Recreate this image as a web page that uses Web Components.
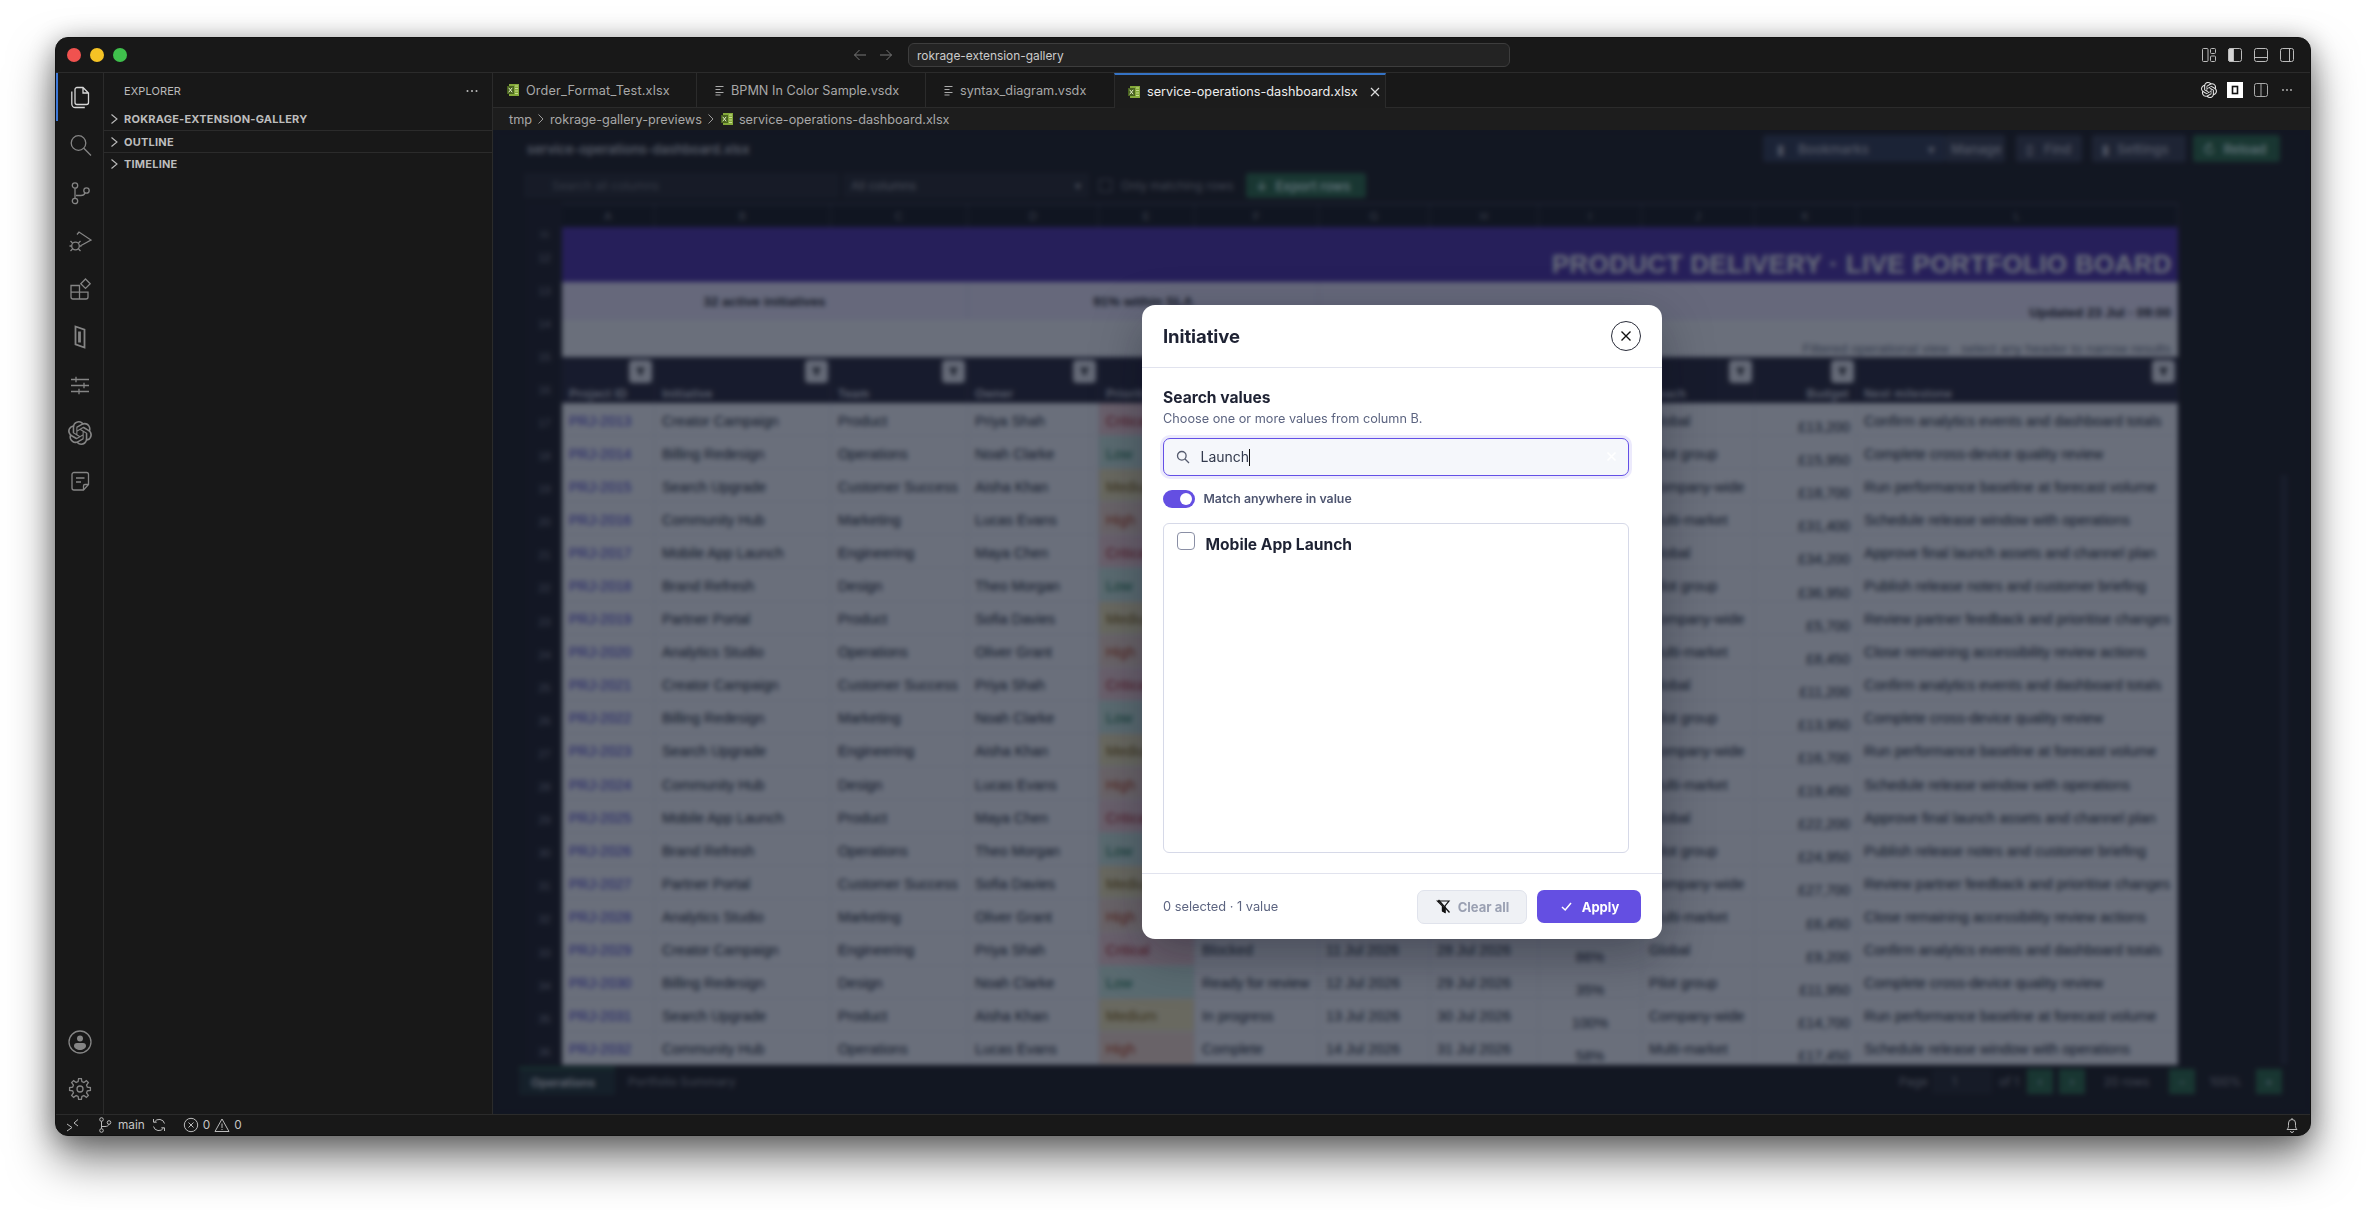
<!DOCTYPE html>
<html lang="en"><head><meta charset="utf-8"><title>rokrage-extension-gallery</title>
<style>
html,body{margin:0;height:100%;background:#fff;overflow:hidden}
body{padding:37px 55px 0;box-sizing:border-box;font-family:Inter,"Liberation Sans",sans-serif}
</style></head><body>
<x-window>
  <x-titlebar></x-titlebar>
  <x-activitybar></x-activitybar>
  <x-sidebar></x-sidebar>
  <x-editor></x-editor>
  <x-statusbar></x-statusbar>
</x-window>
<script>
const def=(name,html)=>customElements.define(name,class extends HTMLElement{constructor(){super();const r=this.attachShadow({mode:'open'});r.innerHTML=typeof html==='function'?html():html;}});
const xl=(s=14)=>`<svg width="${s}" height="${s}" viewBox="0 0 14 14" style="flex:none"><path d="M3 1h8l2 0v12H3z" fill="#84a93a"/><path d="M9 3h3M9 5.500h3M9 8h3M9 10.500h3" stroke="#c7dc8e" stroke-width="1"/><rect x="1" y="3" width="7" height="8" fill="#49631f"/><path d="M2.700 4.800l3.500 4.500M6.200 4.800l-3.500 4.500" stroke="#e5f0c8" stroke-width="1"/></svg>`;
const vs=`<svg width="10" height="14" viewBox="0 0 10 14" style="flex:none"><path d="M0.500 3.500h8M0.500 6.500h5M0.500 9.500h8M0.500 12h5" stroke="#aaa" stroke-width="1.200"/></svg>`;
const OPENAI="M22.2819 9.8211a5.9847 5.9847 0 0 0-.5157-4.9108 6.0462 6.0462 0 0 0-6.5098-2.9A6.0651 6.0651 0 0 0 4.9807 4.1818a5.9847 5.9847 0 0 0-3.9977 2.9 6.0462 6.0462 0 0 0 .7427 7.0966 5.98 5.98 0 0 0 .511 4.9107 6.051 6.051 0 0 0 6.5146 2.9001A5.9847 5.9847 0 0 0 13.2599 24a6.0557 6.0557 0 0 0 5.7718-4.2058 5.9894 5.9894 0 0 0 3.9977-2.9001 6.0557 6.0557 0 0 0-.7475-7.0729zm-9.022 12.6081a4.4755 4.4755 0 0 1-2.8764-1.0408l.1419-.0804 4.7783-2.7582a.7948.7948 0 0 0 .3927-.6813v-6.7369l2.02 1.1686a.071.071 0 0 1 .038.052v5.5826a4.504 4.504 0 0 1-4.4945 4.4944zm-9.6607-4.1254a4.4708 4.4708 0 0 1-.5346-3.0137l.142.0852 4.783 2.7582a.7712.7712 0 0 0 .7806 0l5.8428-3.3685v2.3324a.0804.0804 0 0 1-.0332.0615L9.74 19.9502a4.4992 4.4992 0 0 1-6.1408-1.6464zM2.3408 7.8956a4.485 4.485 0 0 1 2.3655-1.9728V11.6a.7664.7664 0 0 0 .3879.6765l5.8144 3.3543-2.0201 1.1685a.0757.0757 0 0 1-.071 0l-4.8303-2.7865A4.504 4.504 0 0 1 2.3408 7.872zm16.5963 3.8558L13.1038 8.364 15.1192 7.2a.0757.0757 0 0 1 .071 0l4.8303 2.7913a4.4944 4.4944 0 0 1-.6765 8.1042v-5.6772a.79.79 0 0 0-.407-.667zm2.0107-3.0231l-.142-.0852-4.7735-2.7818a.7759.7759 0 0 0-.7854 0L9.409 9.2297V6.8974a.0662.0662 0 0 1 .0284-.0615l4.8303-2.7866a4.4992 4.4992 0 0 1 6.6802 4.66zM8.3065 12.863l-2.02-1.1638a.0804.0804 0 0 1-.038-.0567V6.0742a4.4992 4.4992 0 0 1 7.3757-3.4537l-.142.0805L8.704 5.459a.7948.7948 0 0 0-.3927.6813zm1.0976-2.3654l2.602-1.4998 2.6069 1.4998v2.9994l-2.5974 1.4997-2.6067-1.4997Z";
const gear=(()=>{let d='';const n=8,cx=12,cy=12,R=10.5,r=7.6;for(let i=0;i<n;i++){const a=i/n*2*Math.PI-Math.PI/2,st=2*Math.PI/n;const pts=[[r,a-st*.32],[R,a-st*.17],[R,a+st*.17],[r,a+st*.32]];pts.forEach((p,j)=>{const x=(cx+p[0]*Math.cos(p[1])).toFixed(2),y=(cy+p[0]*Math.sin(p[1])).toFixed(2);d+=(i===0&&j===0?'M':'L')+x+' '+y});}return d+'Z'})();

def('x-window',`<style>
:host{display:grid;grid-template-columns:47px 390px 1fr;grid-template-rows:35px 1fr 21px;width:2256px;height:1099px;box-sizing:border-box;background:#181818;border:1px solid #111;border-radius:13px;overflow:hidden;
box-shadow:0 24px 46px rgba(0,0,0,.5),0 4px 26px rgba(0,0,0,.32)}
::slotted(x-titlebar),::slotted(x-statusbar){grid-column:1/-1}
</style><slot></slot>`);

def('x-titlebar',`<style>
:host{display:flex;align-items:center;box-sizing:border-box;background:#181818;border-bottom:1px solid #2b2b2b;padding-left:11px;color:#ccc;font:12px Inter,sans-serif}
.l{display:flex;gap:9px}.l i{width:14px;height:14px;border-radius:50%;display:block}
.nav{display:flex;gap:10px;margin-left:725px;width:48px}
.cmd{margin-left:8px;width:602px;height:24px;box-sizing:border-box;border:1px solid #3d3d3d;border-radius:6px;background:#232323;display:flex;align-items:center;padding-left:8px;font-size:11.900px;color:#ccc}
.r{margin-left:auto;display:flex;gap:10px;padding-right:15px;width:94px;justify-content:flex-end}
svg{display:block}
</style>
<div class="l"><i style="background:#f0524f"></i><i style="background:#f5c325"></i><i style="background:#3fc04c"></i></div>
<div class="nav"><svg width="16" height="16" viewBox="0 0 16 16" fill="none" stroke="#777"><path d="M14 8H2.500M7.500 3l-5 5 5 5"/></svg><svg width="16" height="16" viewBox="0 0 16 16" fill="none" stroke="#777"><path d="M2 8h11.500M8.500 3l5 5-5 5"/></svg></div>
<div class="cmd">rokrage-extension-gallery</div>
<div class="r">
<svg width="16" height="16" viewBox="0 0 16 16" fill="none" stroke="#bbb"><rect x="1.500" y="1.500" width="5.500" height="13" rx="1"/><rect x="9.500" y="1.500" width="5" height="5" rx="1"/><rect x="9.500" y="9" width="5" height="5.500" rx="1"/></svg>
<svg width="16" height="16" viewBox="0 0 16 16" fill="none" stroke="#bbb"><rect x="1.500" y="1.500" width="13" height="13" rx="2"/><path d="M1.500 3.500a2 2 0 0 1 2-2h3v13h-3a2 2 0 0 1-2-2z" fill="#d5d5d5"/></svg>
<svg width="16" height="16" viewBox="0 0 16 16" fill="none" stroke="#bbb"><rect x="1.500" y="1.500" width="13" height="13" rx="2"/><path d="M1.500 10.500h13"/></svg>
<svg width="16" height="16" viewBox="0 0 16 16" fill="none" stroke="#bbb"><rect x="1.500" y="1.500" width="13" height="13" rx="2"/><path d="M10.500 1.500v13"/></svg>
</div>`);

const acts=[
`<path d="M9 2.500h6l5.500 5.500v9.500a2 2 0 0 1-2 2H9a2 2 0 0 1-2-2v-13a2 2 0 0 1 2-2z M15 2.500V8h5.500"/><path d="M3.800 6.500v12.500a3.500 3.500 0 0 0 3.500 3.500h9.500"/>`,
`<circle cx="10.500" cy="10" r="7.300"/><path d="M15.800 15.300L23 22.500"/>`,
`<circle cx="7" cy="4.500" r="2.700"/><circle cx="7" cy="20" r="2.700"/><circle cx="18.500" cy="9.500" r="2.700"/><path d="M7 7.200v10.100M8 14.500h5c2.500 0 3.500-1 4-2.500"/>`,
`<path d="M9 5.500l2-2.500 12 8-10 5.500"/><circle cx="7.500" cy="17" r="3.800"/><path d="M4.500 14L2.500 12M10.500 14l2-2M3.500 17H1.500M11.500 17H13.500M4.500 20l-2 2M10.500 20l2 2"/>`,
`<path d="M3 8.500h8.500V22H5a2 2 0 0 1-2-2zM3 15.200h17V20a2 2 0 0 1-2 2h-6.500M11.500 15.200V22"/><path d="M17.500 2l4.700 4.700-4.700 4.700-4.700-4.700z"/>`,
`<path d="M7.500 1.500l9 3.200v17.800l-9-3.200z" stroke-width="1.800"/><path d="M11.500 6.500v11" stroke-width="2.800"/>`,
`<path d="M3 6.500h18M3 12.500h18M3 18.500h18M8 3.800v5.400M16 9.800v5.400M11 15.800v5.400" />`,
`<path d="${OPENAI}" fill="#858585" stroke="none"/>`,
`<path d="M6 3.500h12.500a2 2 0 0 1 2 2v10l-5 5.500H6a2 2 0 0 1-2-2V5.500a2 2 0 0 1 2-2z"/><path d="M20.500 15.500h-3.500a1.500 1.500 0 0 0-1.500 1.500v4M8 9h8.500M8 13h5"/>`];
def('x-activitybar',`<style>
:host{display:flex;flex-direction:column;align-items:center;box-sizing:border-box;border-right:1px solid #2b2b2b;background:#181818;position:relative;padding-top:12px;width:48px;margin-right:-1px}
.i{width:24px;height:24px;margin-bottom:24px;display:block}
.bar{position:absolute;left:0;top:0;width:2px;height:48px;background:#3d78d8}
.sp{flex:1}
svg{fill:none;stroke:#858585;stroke-width:1.300}
svg.a{stroke:#d7d7d7}
</style><div class="bar"></div>
${acts.map((p,i)=>`<svg class="i ${i==0?'a':''}" viewBox="0 0 24 24">${p}</svg>`).join('')}
<div class="sp"></div>
<svg class="i" viewBox="0 0 24 24" style="margin-bottom:23px"><circle cx="12" cy="12" r="11"/><circle cx="12" cy="8.500" r="3" fill="#858585" stroke="none"/><path d="M6 16a3 3 0 0 1 3-3h6a3 3 0 0 1 3 3c0 2-3 4-6 4s-6-2-6-4z" fill="#858585" stroke="none"/></svg>
<svg class="i" viewBox="0 0 24 24" style="margin-bottom:13px"><path d="${gear}"/><circle cx="12" cy="12" r="3"/></svg>`);

def('x-sidebar',`<style>
:host{display:block;box-sizing:border-box;border-right:1px solid #2b2b2b;background:#181818;color:#ccc;font:11px Inter,sans-serif}
.h{height:35px;display:flex;align-items:center;padding:0 12px 0 21px;color:#bbb;letter-spacing:.1px}
.h span{flex:1}
.s{display:flex;align-items:center;height:22px;box-sizing:border-box;border-bottom:1px solid #2b2b2b;font-weight:700;color:#bdbdbd;letter-spacing:.22px;gap:5px;padding-left:6px}
.s:last-child{border:0}
svg{flex:none}
</style>
<div class="h"><span>EXPLORER</span><svg width="16" height="16" viewBox="0 0 16 16" fill="#bbb"><circle cx="3.500" cy="8" r="1"/><circle cx="8" cy="8" r="1"/><circle cx="12.500" cy="8" r="1"/></svg></div>
<div class="s" style="height:23px"><svg width="10" height="12" viewBox="0 0 10 12" fill="none" stroke="#bbb" stroke-width="1.100"><path d="M2.500 1.500L8 6l-5.500 4.500"/></svg>ROKRAGE-EXTENSION-GALLERY</div>
<div class="s"><svg width="10" height="12" viewBox="0 0 10 12" fill="none" stroke="#bbb" stroke-width="1.100"><path d="M2.500 1.500L8 6l-5.500 4.500"/></svg>OUTLINE</div>
<div class="s"><svg width="10" height="12" viewBox="0 0 10 12" fill="none" stroke="#bbb" stroke-width="1.100"><path d="M2.500 1.500L8 6l-5.500 4.500"/></svg>TIMELINE</div>`);

def('x-editor',`<style>
:host{display:flex;flex-direction:column;min-width:0;min-height:0}
</style><x-tabs></x-tabs><x-crumbs></x-crumbs><x-sheetview></x-sheetview>`);

def('x-tabs',`<style>
:host{display:flex;height:35px;box-sizing:border-box;border-bottom:1px solid #2b2b2b;background:#181818;font:12.700px Inter,sans-serif;color:#a8a8a8;flex:none}
.t{display:flex;align-items:center;gap:6px;box-sizing:border-box;border-right:1px solid #2b2b2b}
.a{background:#1c1c1c;color:#eee;border-top:2px solid #3573c5;border-left:1px solid #2b2b2b;margin-bottom:-1px;gap:6px}
.r{margin-left:auto;display:flex;gap:10px;align-items:center;padding-right:15px}
svg{display:block}
</style>
<div class="t" style="width:204px;padding-left:13px">${xl()}<span style="letter-spacing:.17px">Order_Format_Test.xlsx</span></div>
<div class="t" style="width:229px;padding-left:18px">${vs}BPMN In Color Sample.vsdx</div>
<div class="t" style="width:188px;padding-left:18px;border-right:0">${vs}syntax_diagram.vsdx</div>
<div class="t a" style="width:272px;padding-left:12px">${xl()}service-operations-dashboard.xlsx<svg style="margin-left:5px" width="12" height="12" viewBox="0 0 12 12" stroke="#ddd" stroke-width="1.200"><path d="M2 2l8 8M10 2l-8 8"/></svg></div>
<div class="r">
<svg width="16" height="16" viewBox="0 0 24 24" fill="#e5e5e5"><path d="${OPENAI}"/></svg>
<svg width="16" height="16" viewBox="0 0 16 16"><rect width="16" height="16" fill="#fff"/><rect x="5.500" y="4.500" width="5" height="7" fill="#fff" stroke="#111" stroke-width="1.600"/></svg>
<svg width="16" height="16" viewBox="0 0 16 16" fill="none" stroke="#aaa"><rect x="1.500" y="1.500" width="13" height="13" rx="2"/><path d="M8 1.500v13"/></svg>
<svg width="16" height="16" viewBox="0 0 16 16" fill="#bbb"><circle cx="4" cy="8" r=".9"/><circle cx="8" cy="8" r=".9"/><circle cx="12" cy="8" r=".9"/></svg>
</div>`);

const chev=`<svg style="margin:0 1px" width="8" height="14" viewBox="0 0 8 14" fill="none" stroke="#999"><path d="M1.500 2.500L6 7l-4.500 4.500"/></svg>`;
def('x-crumbs',`<style>
:host{display:flex;align-items:center;gap:4px;height:22px;flex:none;background:#1d1d1d;color:#a8a8a8;font:12.700px Inter,sans-serif;padding-left:16px}
</style>tmp${chev}rokrage-gallery-previews${chev}${xl()}<span style="margin-left:1px">service-operations-dashboard.xlsx</span>`);

const cols=[93,176,137,131,96,124,111,109,103,113,102,321];
const letters='ABCDEFGHIJKL'.split('');
const heads=['Project ID','Initiative','Team','Owner','Priority','Status','Start','End','Progress','Reach','Budget','Next milestone'];
const inits=['Creator Campaign','Billing Redesign','Search Upgrade','Community Hub','Mobile App Launch','Brand Refresh','Partner Portal','Analytics Studio'];
const teams=['Product','Operations','Customer Success','Marketing','Engineering','Design'];
const owners=['Priya Shah','Noah Clarke','Aisha Khan','Lucas Evans','Maya Chen','Theo Morgan','Sofia Davies','Oliver Grant'];
const prios=[['Critical','cr'],['Low','lo'],['Medium','m'],['High','hi']];
const stats=['Blocked','Ready for review','In progress','Complete'];
const reach=['Global','Pilot group','Company-wide','Multi-market'];
const prog=['86%','35%','100%','58%'];
const next=['Confirm analytics events and dashboard totals','Complete cross-device quality review','Run performance baseline at forecast volume','Schedule release window with operations','Approve final launch assets and channel plan','Publish release notes and customer briefing','Review partner feedback and prioritise changes','Close remaining accessibility review actions'];
const budgets=[13200,15950,18700,31400,34200,36950,5700,8450,11200,13950,16700,19450,22200,24950,27700,6450,9200,11950,14700,17450];
const dateOf=i=>{const d=new Date(Date.UTC(2026,5,25+i));return d.getUTCDate()+' '+['Jun','Jul','Aug'][d.getUTCMonth()-5]+' 2026'};
const fb=`<i class="fb"><svg width="11" height="11" viewBox="0 0 12 12" fill="#222"><path d="M1 2h10L7.500 6.500V11l-3-1.500v-3z"/></svg></i>`;
def('x-sheet',()=>{
let rows='';
for(let i=0;i<20;i++){const p=prios[i%4];const u=i<16?' under':'';
rows+=`<div class="c link">PRJ-${2013+i}</div><div class="c">${inits[i%8]}</div><div class="c">${teams[i%6]}</div><div class="c">${owners[i%8]}</div>
<div class="c ${p[1]}">${p[0]}</div><div class="c${u}">${stats[i%4]}</div><div class="c${u}">${dateOf(i)}</div><div class="c${u}">${dateOf(i+17)}</div><div class="c ctr${u}">${prog[i%4]}</div><div class="c">${reach[i%4]}</div><div class="c bud">£${budgets[i].toLocaleString('en-GB')}</div><div class="c nb">${next[i%8]}</div>`;}
let g='<div class="g" style="height:14px;font-size:9px">11</div>';
for(let n=12;n<=36;n++)g+=`<div class="g">${n}</div>`;
return `<style>
:host{display:flex;flex:none;margin-top:5px;width:1651px;font:14.300px "Liberation Sans",Arial,sans-serif;color:#111827}
.gut{width:35px;flex:none;padding-top:24px;height:862px;box-sizing:border-box;background:#1c1a1c;overflow:hidden}
.g{height:33.100px;display:flex;align-items:center;justify-content:center;color:#8c8c96;font-size:11px}
.grid{display:grid;grid-template-columns:${cols.map(c=>c+'px').join(' ')};grid-template-rows:22px 55px 38px 37px 46px repeat(20,33.100px);border-top:2px solid #34333a;flex:none;width:1616px}
.l{background:#141414;color:#888;font-size:11px;display:flex;align-items:center;justify-content:center;border-right:1px solid #3a3a3e}
.ban{grid-column:1/-1;background:#4e2ea8;color:#fff;font-size:26px;font-weight:700;display:flex;align-items:center;justify-content:flex-end;padding:19px 6px 0 0;box-sizing:border-box;letter-spacing:.35px}
.s1{background:#f3edff;font-size:13.400px;font-weight:700;display:flex;align-items:center;justify-content:center;border-right:1px solid #ded6ee;color:#222}
.s2{grid-column:1/-1;background:#fff;font-size:13.500px;color:#6b7280;display:flex;align-items:flex-end;justify-content:flex-end;padding:0 7px 1px 0}
.h{background:#272432;color:#d3d3da;font-size:12px;font-weight:700;position:relative;display:flex;align-items:flex-end;padding:0 7px 2px;box-sizing:border-box;border-right:1px solid #393644;letter-spacing:.2px}
.under{visibility:hidden}
.fb{position:absolute;right:2px;top:3px;width:23px;height:23px;border-radius:4px;background:#f1f1f4;display:flex;align-items:center;justify-content:center}
.c{background:#fff;display:flex;align-items:center;padding:3px 7px 0;box-sizing:border-box;border-right:1px solid #e8eaef;border-bottom:1px solid #eef0f4;white-space:nowrap;overflow:hidden}
.link{color:#4338ca;font-size:14px;font-weight:500}
.nb{font-size:14.500px}
.bud{justify-content:flex-end;align-items:flex-end;padding:0 6px 0 0}.ctr{justify-content:center;align-items:flex-end;padding:0}
.c.lo{background:#d5f3e3;color:#14794a}.c.m{background:#fbeeb9;color:#856404}.c.hi{background:#fde0cd;color:#c2410c}.c.cr{background:#fdd7d7;color:#b91c1c}
</style>
<div class="gut">${g}</div>
<div class="grid">
${letters.map(l=>`<div class="l">${l}</div>`).join('')}
<div class="ban">PRODUCT DELIVERY · LIVE PORTFOLIO BOARD</div>
<div class="s1" style="grid-column:1/4">32 active initiatives</div>
<div class="s1" style="grid-column:4/7">91% within SLA</div>
<div class="s1" style="grid-column:7/-1;justify-content:flex-end;padding:22px 7px 0 0;border:0">Updated 23 Jul · 09:00</div>
<div class="s2">Filtered operational view · select any header to narrow results</div>
${heads.map((h,i)=>`<div class="h" style="${i==10?'justify-content:flex-end':''}"><span class="${i>=5&&i<=8?'under':''}">${h}</span>${i>=5&&i<=8?'':fb}</div>`).join('')}
${rows}
</div>`});

def('x-sheetview',`<style>
:host{display:flex;flex-direction:column;flex:1;min-height:0;position:relative;background:#1a1816;box-sizing:border-box;padding:5px 30px 0 34px;font:12px Inter,sans-serif;color:#c5c5c5;overflow:hidden}
.r1{display:flex;align-items:center;height:27px;flex:none}
.title{font-size:13px;flex:1;color:#c9c9c9;font-weight:600}
.btn{height:27px;display:flex;align-items:center;gap:8px;padding:0 10px;box-sizing:border-box;background:#383b46;font-size:13px;font-weight:600;color:#b5b5bd;border-radius:3px;white-space:nowrap}
.sel{background:#31384a}
.g{background:#2a6b3f;color:#dfe}
.r2{display:flex;align-items:center;height:25px;margin:11px 0 0 -3px;flex:none;font-size:12px}
.inp{width:315px;height:25px;background:#252424;padding-left:28px;box-sizing:border-box;display:flex;align-items:center;color:#777;margin-right:4px}
.sel2{width:246px;height:25px;background:#252424;padding-left:8px;box-sizing:border-box;display:flex;align-items:center;justify-content:space-between;padding-right:8px;color:#aaa;margin-right:10px}
.cb{width:11px;height:11px;border:1px solid #777;margin-right:9px}
.foot{display:flex;align-items:center;height:30px;margin:1px 0 0 -8px;flex:none;font-size:12px}
.stab{height:28px;display:flex;align-items:center;box-sizing:border-box;padding:0 12px;color:#aaa;font-weight:600}
.on{width:96px;background:#20302a;border-top:2px solid #2a6b3f;color:#e9e9e9}
.pg{margin-left:auto;display:flex;align-items:center;height:25px;margin-right:-2px;color:#9a9a9a;font-size:12px}
.pg span{display:block;text-align:center;white-space:nowrap}
.pi{width:60px;height:25px;background:#232323;margin:0 6px 0 4px;display:flex;align-items:center;padding-left:20px;box-sizing:border-box}
.gb{width:26px;height:25px;background:#2a6b3f;display:flex;align-items:center;justify-content:center;color:#cde}
.sb{position:absolute;right:23px;top:345px;bottom:50px;width:6px;background:#2a2c32}
</style>
<div class="r1"><div class="title">service-operations-dashboard.xlsx</div>
<div class="btn sel" style="width:182px;justify-content:space-between;padding-left:14px"><span style="display:flex;gap:14px"><span>▮</span><span>Bookmarks</span></span><span>▾</span></div>
<div class="btn" style="width:60px;margin-right:11px;padding:0 6px">Manage</div>
<div class="btn" style="width:66px;margin-right:10px;padding:0 8px 0 10px">▯ <span style="margin-left:3px">Find</span></div>
<div class="btn" style="width:94px;margin-right:7px;padding:0 10px">▮ <span>Settings</span></div>
<div class="btn g" style="width:87px;padding:0 10px">↻ <span>Reload</span></div></div>
<div class="r2"><div class="inp">Search all columns</div><div class="sel2">All columns<span>▾</span></div><div class="cb"></div><span style="width:125px;color:#999">Only matching rows</span><div class="btn g" style="width:120px;height:25px">↓ <span>Export rows</span></div></div>
<x-sheet></x-sheet>
<div class="foot"><div class="stab on">Operations</div><div class="stab" style="margin-left:1px;color:#777">Portfolio Summary</div>
<div class="pg"><span style="width:29px">Page</span><div class="pi">1</div><span style="width:22px;margin-right:7px">of 1</span><div class="gb">‹</div><div class="gb" style="margin:0 18px 0 6px">›</div><span style="width:47px;margin-right:19px">20 rows</span><div class="gb">−</div><span style="width:35px;margin:0 13px">100%</span><div class="gb">+</div></div></div>
<div class="sb"></div>
<x-filter-dialog></x-filter-dialog>`);

def('x-filter-dialog',`<style>
:host{position:absolute;inset:0;display:flex;align-items:center;justify-content:center;background:rgba(15,23,42,.62);-webkit-backdrop-filter:blur(2.500px);backdrop-filter:blur(2.500px);font-family:Inter,sans-serif;color:#1e2233}
.m{width:520px;height:634px;background:#fff;border-radius:13px;display:flex;flex-direction:column;box-shadow:0 16px 50px rgba(10,12,25,.35);box-sizing:border-box}
header{height:62px;flex:none;display:flex;align-items:center;justify-content:space-between;padding:0 21px 0 21.500px;border-bottom:1px solid #e1e3ee;box-sizing:content-box}
h2{margin:0;font-size:18.500px;font-weight:700;letter-spacing:-.1px}
.x{width:30px;height:30px;box-sizing:border-box;border:1.500px solid #2a2d3a;border-radius:50%;display:flex;align-items:center;justify-content:center;}
.b{flex:1;padding:20px 33px 0 21px;display:flex;flex-direction:column;min-height:0}
h3{margin:0;font-size:15.600px;font-weight:700;line-height:20px;padding-left:.5px}
.sub{font-size:12.700px;color:#5c6480;line-height:18px;margin-top:2px;padding-left:.5px}
.in{height:38px;margin-top:10px;box-sizing:border-box;border:1.500px solid #6450e6;border-radius:7px;background:#f5f7fb;box-shadow:0 0 0 3px rgba(100,80,230,.12);display:flex;align-items:center;padding-left:12px;font-size:14px;color:#333a4d;gap:11px}
.caret{display:inline-block;width:1px;height:17px;background:#111;vertical-align:middle;margin-left:0}
.in .cl{margin-left:auto;margin-right:11px}
.tg{display:flex;align-items:center;gap:9px;margin-top:14px;font-size:12.300px;font-weight:600;color:#4e5570;height:18px}
.sw{width:32px;height:18px;border-radius:9px;background:#644fe2;position:relative;flex:none}
.sw::after{content:"";position:absolute;right:3px;top:3px;width:12px;height:12px;border-radius:50%;background:#fff}
.list{margin-top:15px;height:331px;box-sizing:border-box;border:1px solid #d6d9e8;border-radius:6px;padding:8px 13px;display:flex;gap:11px;align-items:flex-start;font-size:15.600px;font-weight:700}
.cbx{width:18px;height:18px;box-sizing:border-box;border:1px solid #8a8fa5;border-radius:4px;flex:none}
.it{line-height:22px;margin-top:2px}
footer{height:65px;flex:none;border-top:1px solid #e1e3ee;display:flex;align-items:center;padding:0 21px;margin-top:20px;font-size:12.800px;color:#5c6480}
footer span{flex:1;padding-left:.5px}
.bt{height:34px;display:flex;align-items:center;justify-content:center;box-sizing:border-box;border-radius:7px;font-size:13px;font-weight:700;gap:7px}
.clr{width:110px;background:#eff1f5;border:1px solid #e0e3ec;color:#9aa0b2;margin-right:10px;padding-left:2px}
.ap{width:104px;background:#644fe2;color:#fff;height:33px;gap:9px;padding-left:2px}
svg{display:block;flex:none}
</style>
<div class="m" role="dialog">
<header><h2>Initiative</h2><div class="x"><svg width="12" height="12" viewBox="0 0 12 12" stroke="#111" stroke-width="1.400"><path d="M1.500 1.500l9 9M10.500 1.500l-9 9"/></svg></div></header>
<div class="b">
<h3>Search values</h3>
<div class="sub">Choose one or more values from column B.</div>
<div class="in"><svg width="14" height="14" viewBox="0 0 14 14" fill="none" stroke="#555b6e" stroke-width="1.300"><circle cx="5.800" cy="5.800" r="4.300"/><path d="M9 9l4 4"/></svg><div>Launch<span class="caret"></span></div><svg class="cl" width="11" height="11" viewBox="0 0 11 11" stroke="#fff" stroke-width="1.600"><path d="M1.500 1.500l8 8M9.500 1.500l-8 8"/></svg></div>
<div class="tg"><div class="sw"></div>Match anywhere in value</div>
<div class="list"><div class="cbx"></div><div class="it">Mobile App Launch</div></div>
</div>
<footer><span>0 selected · 1 value</span>
<div class="bt clr"><svg width="15" height="15" viewBox="0 0 15 15" fill="none" stroke="#111" stroke-width="1.200"><path d="M1.500 2h11.500L9 7v6L6.500 11.800V7z"/><path d="M6.500 7.500L6.500 12l2.500 1.500V9z" fill="#111"/><path d="M2.500 1l11 12.500" stroke-width="1.300"/></svg>Clear all</div>
<div class="bt ap"><svg width="13" height="13" viewBox="0 0 13 13" fill="none" stroke="#fff" stroke-width="1.500"><path d="M2 7l3.200 3L11 3"/></svg>Apply</div></footer>
</div>`);

const ic=(w,p)=>`<svg width="${w}" height="16" viewBox="0 0 ${w} 16" fill="none" stroke="#bbb" stroke-width="1">${p}</svg>`;
def('x-statusbar',`<style>
:host{display:flex;align-items:center;box-sizing:border-box;border-top:1px solid #2b2b2b;background:#181818;color:#c5c5c5;font:11.800px Inter,sans-serif}
svg{display:block;flex:none}
.sp{flex:1}
</style>
<span style="margin-left:9px">${ic(16,'<path d="M2 7l5 3.500-5 3.500M13 2.500L9 6l4 3"/>')}</span>
<span style="margin-left:16px">${ic(16,'<circle cx="4.500" cy="2.500" r="1.800"/><circle cx="4.500" cy="13.500" r="1.800"/><circle cx="12" cy="5.500" r="1.800"/><path d="M4.500 4.300v7.400M5 9.500h3c2.500 0 3.500-1 4-2.200"/>')}</span>
<span style="margin-left:5px">main</span>
<span style="margin-left:6px">${ic(16,'<path d="M13.500 6.500A5.500 5.500 0 0 0 3.500 5M2.500 2v3.200h3.200M2.500 9.500a5.500 5.500 0 0 0 10 1.500M13.500 14v-3.200h-3.200"/>')}</span>
<span style="margin-left:16px">${ic(16,'<circle cx="8" cy="8" r="6.700"/><path d="M5.500 5.500l5 5M10.500 5.500l-5 5"/>')}</span>
<span style="margin-left:4px">0</span>
<span style="margin-left:4px">${ic(16,'<path d="M8 2L15 14.500H1zM8 6.500v4.500M8 12v1"/>')}</span>
<span style="margin-left:4px">0</span>
<div class="sp"></div>
<span style="margin-right:10px">${ic(16,'<path d="M3 12.500c1-1 1.500-2 1.500-4V6a3.500 3.500 0 0 1 7 0v2.500c0 2 .5 3 1.500 4zM6.500 14a1.500 1.500 0 0 0 3 0M8 1v1.500"/>')}</span>`);
</script>
</body></html>
